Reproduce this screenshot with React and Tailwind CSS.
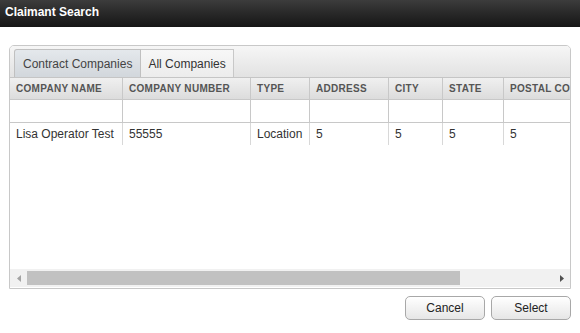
import React from 'react';

const columns = [
  { key: 'name', label: 'Company Name', width: 'w-[113px]' },
  { key: 'number', label: 'Company Number', width: 'w-[128px]' },
  { key: 'type', label: 'Type', width: 'w-[59px]' },
  { key: 'address', label: 'Address', width: 'w-[79px]' },
  { key: 'city', label: 'City', width: 'w-[54px]' },
  { key: 'state', label: 'State', width: 'w-[61px]' },
  { key: 'postal', label: 'Postal Code', width: 'w-[110px]' },
];

const rows = [
  { name: 'Lisa Operator Test', number: '55555', type: 'Location', address: '5', city: '5', state: '5', postal: '5' },
];

const App = () => {
  return (
    <div className="w-[580px] h-[333px] bg-white overflow-hidden font-['Liberation_Sans',Arial,sans-serif] text-[#333]">
      <div className="h-[27px] bg-gradient-to-b from-[#3c3c3c] to-[#161616] pl-[5px] pt-[3px] text-[12px] font-bold text-white">
        Claimant Search
      </div>

      <div className="mx-[9px] mt-[18px] h-[244px] border border-[#c8c8c8] rounded-t-[5px] flex flex-col overflow-hidden">
        <div className="h-[32px] shrink-0 bg-gradient-to-b from-[#f6f6f6] to-[#e2e2e2] border-b border-[#c5c5c5] flex items-end pl-[4px]">
          <div className="h-[28px] px-[8px] flex items-center text-[12px] text-[#444] bg-gradient-to-b from-[#e4e8ec] to-[#d2d7dc] border border-b-0 border-[#c0c0c0] rounded-tl-[3px]">
            Contract Companies
          </div>
          <div className="h-[28px] px-[7px] flex items-center text-[12px] text-[#333] bg-gradient-to-b from-[#f7f7f7] to-[#ececec] border-r border-t border-[#c8c8c8]">
            All Companies
          </div>
        </div>

        <div className="flex-1 overflow-hidden">
          <div className="flex w-[620px] h-[22px] bg-gradient-to-b from-[#f0f0f0] to-[#dcdcdc] border-b border-[#c8c8c8]">
            {columns.map((col) => (
              <div
                key={col.key}
                className={`${col.width} shrink-0 border-r border-[#c8c8c8] pl-[6px] flex items-center text-[10px] font-bold uppercase tracking-[0.3px] text-[#555]`}
              >
                {col.label}
              </div>
            ))}
          </div>
          <div className="flex w-[620px] h-[23px] border-b border-[#c8c8c8]">
            {columns.map((col) => (
              <div key={col.key} className={`${col.width} shrink-0 border-r border-[#c8c8c8] bg-white`} />
            ))}
          </div>
          {rows.map((row, i) => (
            <div key={i} className="flex w-[620px] h-[22px]">
              {columns.map((col) => (
                <div
                  key={col.key}
                  className={`${col.width} shrink-0 border-r border-[#d8d8d8] pl-[6px] flex items-center text-[12px] text-[#333]`}
                >
                  {row[col.key]}
                </div>
              ))}
            </div>
          ))}
        </div>

        <div className="h-[18px] shrink-0 bg-[#f1f1f1] flex items-center mb-[1px]">
          <div className="w-[17px] flex justify-center">
            <svg width="4" height="7" viewBox="0 0 4 7">
              <path d="M4 0 L0 3.5 L4 7 Z" fill="#a3a3a3" />
            </svg>
          </div>
          <div className="w-[433px] h-[14px] bg-[#c1c1c1]" />
          <div className="flex-1" />
          <div className="w-[17px] flex justify-center">
            <svg width="4" height="7" viewBox="0 0 4 7">
              <path d="M0 0 L4 3.5 L0 7 Z" fill="#505050" />
            </svg>
          </div>
        </div>
      </div>

      <div className="flex justify-end gap-[6px] mr-[9px] mt-[7px]">
        <button className="w-[80px] h-[24px] rounded-[5px] border border-[#a8a8a8] bg-gradient-to-b from-white to-[#e6e6e6] text-[12px] text-[#222]">
          Cancel
        </button>
        <button className="w-[80px] h-[24px] rounded-[5px] border border-[#a8a8a8] bg-gradient-to-b from-white to-[#e6e6e6] text-[12px] text-[#222]">
          Select
        </button>
      </div>
    </div>
  );
};

export default App;
